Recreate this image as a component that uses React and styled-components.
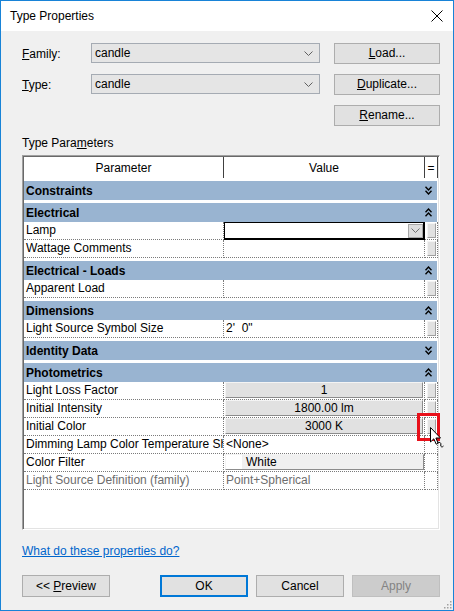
import React from 'react';
import styled, { createGlobalStyle } from 'styled-components';

const GlobalStyle = createGlobalStyle`
  html, body {
    margin: 0;
    padding: 0;
    background: #ffffff;
  }
  body {
    font-family: "Liberation Sans", Arial, sans-serif;
    font-size: 12px;
    color: #000;
  }
`;

const rows = [
  { type: 'cat', label: 'Constraints', open: false },
  { type: 'cat', label: 'Electrical', open: true },
  { label: 'Lamp', kind: 'lamp', side: true },
  { label: 'Wattage Comments', side: true },
  { type: 'cat', label: 'Electrical - Loads', open: true },
  { label: 'Apparent Load', side: true },
  { type: 'cat', label: 'Dimensions', open: true },
  { label: 'Light Source Symbol Size', value: '2\'  0"', side: true },
  { type: 'cat', label: 'Identity Data', open: false },
  { type: 'cat', label: 'Photometrics', open: true },
  { label: 'Light Loss Factor', kind: 'button', value: '1', side: true },
  { label: 'Initial Intensity', kind: 'button', value: '1800.00 lm', side: true },
  { label: 'Initial Color', kind: 'button', value: '3000 K', side: true },
  { label: 'Dimming Lamp Color Temperature Shift', value: '<None>' },
  { label: 'Color Filter', kind: 'color', value: 'White' },
  { label: 'Light Source Definition (family)', value: 'Point+Spherical', disabled: true },
];

const CloseIcon = () => (
  <svg width="12" height="12" viewBox="0 0 12 12">
    <path d="M0.5 0.5 L11.5 11.5 M11.5 0.5 L0.5 11.5" stroke="#000" strokeWidth="1" fill="none" />
  </svg>
);

const ChevronDown = ({ color = '#606060' }) => (
  <svg width="9" height="5" viewBox="0 0 9 5">
    <path d="M0.5 0.5 L4.5 4.5 L8.5 0.5" stroke={color} strokeWidth="1" fill="none" />
  </svg>
);

const DoubleChevron = ({ open }) => (
  <svg width="7" height="9" viewBox="0 0 7 9" style={{ transform: open ? 'none' : 'scaleY(-1)' }}>
    <path d="M0.5 4.2 L3.5 1 L6.5 4.2 M0.5 8.2 L3.5 5 L6.5 8.2" stroke="#000" strokeWidth="1.4" fill="none" />
  </svg>
);

const Cursor = () => (
  <svg width="16" height="22" viewBox="0 0 16 22">
    <path
      d="M0.5 0.5 L0.5 15 L3.8 11.8 L6.2 17.2 L8.2 16.3 L5.9 11 L10.5 11 Z"
      fill="#fff"
      stroke="#000"
      strokeWidth="1"
    />
    <path d="M7.5 15.5 C9.5 14.5 11.5 16 10.8 18 C10.2 20 12.5 20.5 13.5 19" stroke="#000" strokeWidth="1" fill="none" />
  </svg>
);

const Grip = () => (
  <svg width="9" height="9" viewBox="0 0 9 9">
    {[[7, 1], [4, 4], [7, 4], [1, 7], [4, 7], [7, 7]].map(([x, y]) => (
      <rect key={`${x}-${y}`} x={x} y={y} width="1.5" height="1.5" fill="#a0a0a0" />
    ))}
  </svg>
);

const App = () => (
  <>
    <GlobalStyle />
    <Window>
      <TitleBar>
        <Title>Type Properties</Title>
        <CloseButton>
          <CloseIcon />
        </CloseButton>
      </TitleBar>
      <Body>
        <TopGrid>
          <FieldLabel>
            <u>F</u>amily:
          </FieldLabel>
          <Combo>
            <span>candle</span>
            <ChevronDown />
          </Combo>
          <DialogButton>
            <u>L</u>oad...
          </DialogButton>
          <FieldLabel>
            <u>T</u>ype:
          </FieldLabel>
          <Combo>
            <span>candle</span>
            <ChevronDown />
          </Combo>
          <DialogButton>
            <u>D</u>uplicate...
          </DialogButton>
          <span />
          <span />
          <DialogButton>
            <u>R</u>ename...
          </DialogButton>
        </TopGrid>
        <SectionLabel>
          Type Para<u>m</u>eters
        </SectionLabel>
        <Table>
          <HeaderRow>
            <HeaderCell>Parameter</HeaderCell>
            <HeaderCell>Value</HeaderCell>
            <HeaderCell>=</HeaderCell>
          </HeaderRow>
          {rows.map(row =>
            row.type === 'cat' ? (
              <CategoryRow key={row.label}>
                <span>{row.label}</span>
                <DoubleChevron open={row.open} />
              </CategoryRow>
            ) : (
              <DataRow key={row.label}>
                <ParamCell $disabled={row.disabled}>{row.label}</ParamCell>
                {row.kind === 'lamp' ? (
                  <LampCell>
                    <DropButton>
                      <ChevronDown color="#707070" />
                    </DropButton>
                  </LampCell>
                ) : (
                  <ValueCell $disabled={row.disabled}>
                    {row.kind === 'button' && <GridButton>{row.value}</GridButton>}
                    {row.kind === 'color' && (
                      <ColorButton>
                        <Swatch />
                        {row.value}
                      </ColorButton>
                    )}
                    {!row.kind && row.value}
                  </ValueCell>
                )}
                <SideCell>{row.side && <SideButton />}</SideCell>
              </DataRow>
            )
          )}
          <Highlight />
          <CursorSpot>
            <Cursor />
          </CursorSpot>
        </Table>
        <HelpLink href="#">What do these properties do?</HelpLink>
        <Footer>
          <DialogButton $wide>
            {'<< '}
            <u>P</u>review
          </DialogButton>
          <FooterGroup>
            <DialogButton $wide $default>
              OK
            </DialogButton>
            <DialogButton $wide>Cancel</DialogButton>
            <DialogButton $wide $disabled>
              Apply
            </DialogButton>
          </FooterGroup>
        </Footer>
      </Body>
      <GripSpot>
        <Grip />
      </GripSpot>
    </Window>
  </>
);

const Window = styled.div`
  position: relative;
  box-sizing: border-box;
  width: 454px;
  height: 611px;
  border: 1px solid #1883d7;
  background: #f0f0f0;
  display: flex;
  flex-direction: column;
`;

const TitleBar = styled.div`
  height: 30px;
  background: #ffffff;
  display: flex;
  align-items: center;
  justify-content: space-between;
  padding: 0 10px 0 9px;
`;

const Title = styled.div`
  font-size: 12px;
`;

const CloseButton = styled.div`
  display: flex;
  align-items: center;
  margin-top: -1px;
`;

const Body = styled.div`
  flex: 1;
  display: flex;
  flex-direction: column;
  padding: 12px 13px 0 21px;
`;

const TopGrid = styled.div`
  display: grid;
  grid-template-columns: 69px 243px 106px;
  grid-auto-rows: 21px;
  row-gap: 10px;
  align-items: center;
`;

const FieldLabel = styled.div`
  line-height: 16px;
`;

const Combo = styled.div`
  box-sizing: border-box;
  width: 229px;
  height: 20px;
  margin-top: -1px;
  background: #e5e5e5;
  border: 1px solid #a5abb3;
  display: flex;
  align-items: center;
  justify-content: space-between;
  padding: 0 6px 0 3px;
`;

const DialogButton = styled.div`
  box-sizing: border-box;
  width: ${({ $wide }) => ($wide ? '88px' : '106px')};
  height: ${({ $wide }) => ($wide ? '22px' : '21px')};
  line-height: ${({ $wide, $default }) => ($default ? '18px' : $wide ? '20px' : '19px')};
  text-align: center;
  white-space: pre;
  background: ${({ $disabled }) => ($disabled ? '#cccccc' : '#e1e1e1')};
  border: ${({ $default }) => ($default ? '2px solid #0078d7' : '1px solid #adadad')};
  border-color: ${({ $disabled }) => ($disabled ? '#bfbfbf' : undefined)};
  color: ${({ $disabled }) => ($disabled ? '#838383' : '#000')};
`;

const SectionLabel = styled.div`
  margin-top: 9px;
  line-height: 16px;
`;

const Table = styled.div`
  position: relative;
  box-sizing: border-box;
  margin-top: 4px;
  width: 418px;
  height: 375px;
  background: #ffffff;
  border: 1px solid;
  border-color: #a0a0a0 #ffffff #ffffff #a0a0a0;
  box-shadow: inset 1px 1px 0 #696969, inset -1px -1px 0 #e3e3e3;
  padding: 1px 2px 0 1px;
`;

const Columns = styled.div`
  display: grid;
  grid-template-columns: 200px 201px 13px;
`;

const HeaderRow = styled(Columns)`
  height: 21px;
`;

const HeaderCell = styled.div`
  display: flex;
  align-items: center;
  justify-content: center;
  border-right: 1px solid #404040;
`;

const CategoryRow = styled.div`
  margin-top: 3px;
  height: 19px;
  background: #99b4d1;
  font-weight: bold;
  display: flex;
  align-items: center;
  justify-content: space-between;
  padding: 0 5px 0 2px;
`;

const DataRow = styled(Columns)`
  height: 18px;
`;

const Cell = styled.div`
  box-sizing: border-box;
  border-right: 1px dotted #7a7a7a;
  border-bottom: 1px dotted #7a7a7a;
  white-space: pre;
  overflow: hidden;
  line-height: 17px;
`;

const ParamCell = styled(Cell)`
  padding-left: 2px;
  color: ${({ $disabled }) => ($disabled ? '#6d6d6d' : '#000')};
`;

const ValueCell = styled(Cell)`
  padding-left: 2px;
  color: ${({ $disabled }) => ($disabled ? '#6d6d6d' : '#000')};
`;

const LampCell = styled.div`
  box-sizing: border-box;
  border: 1px solid #000;
  border-right-width: 2px;
  border-bottom-width: 2px;
  display: flex;
  justify-content: flex-end;
  align-items: center;
`;

const DropButton = styled.div`
  box-sizing: border-box;
  width: 15px;
  height: 14px;
  background: #dedede;
  border: 1px solid #a8a8a8;
  display: flex;
  align-items: center;
  justify-content: center;
`;

const GridButton = styled.div`
  box-sizing: border-box;
  height: 16px;
  margin: 0 1px 0 -1px;
  background: #e1e1e1;
  border: 1px solid;
  border-color: #f4f4f4 #8c8c8c #8c8c8c #f4f4f4;
  display: flex;
  align-items: center;
  justify-content: center;
`;

const ColorButton = styled(GridButton)`
  justify-content: flex-start;
  background: #f0f0f0;
  margin-right: 0;
`;

const Swatch = styled.span`
  width: 16px;
  height: 14px;
  background: #ffffff;
  margin-right: 4px;
`;

const SideCell = styled(Cell)`
  display: flex;
  justify-content: center;
  align-items: flex-start;
  padding-top: 1px;
`;

const SideButton = styled.div`
  box-sizing: border-box;
  width: 9px;
  height: 15px;
  background: #e1e1e1;
  border: 1px solid;
  border-color: #f4f4f4 #a0a0a0 #a0a0a0 #f4f4f4;
`;

const Highlight = styled.div`
  position: absolute;
  left: 394px;
  top: 257px;
  width: 17px;
  height: 22px;
  border: 3px solid #e8101a;
`;

const CursorSpot = styled.div`
  position: absolute;
  left: 407px;
  top: 271px;
  line-height: 0;
`;

const HelpLink = styled.a`
  margin-top: 13px;
  align-self: flex-start;
  line-height: 16px;
  color: #0066cc;
  text-decoration: underline;
`;

const Footer = styled.div`
  margin-top: 16px;
  width: 418px;
  display: flex;
  justify-content: space-between;
`;

const FooterGroup = styled.div`
  display: flex;
  gap: 8px;
`;

const GripSpot = styled.div`
  position: absolute;
  right: 1px;
  bottom: 1px;
  line-height: 0;
`;

export default App;
